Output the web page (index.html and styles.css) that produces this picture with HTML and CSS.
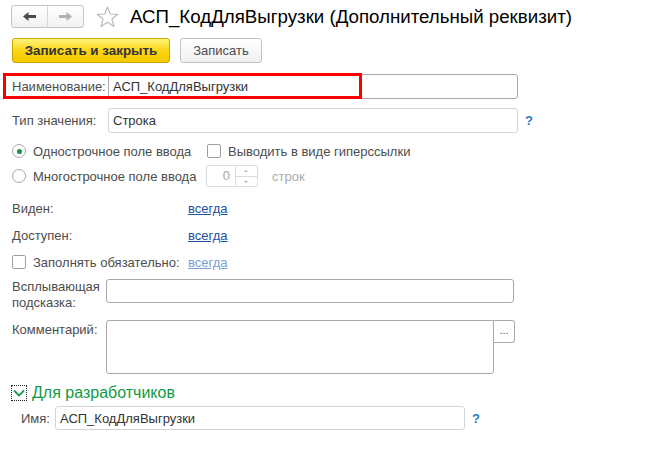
FILE: index.html
```html
<!DOCTYPE html>
<html lang="ru">
<head>
<meta charset="utf-8">
<title>АСП_КодДляВыгрузки</title>
<link rel="stylesheet" href="styles.css">
</head>
<body>
<div class="page">
  <header class="head">
    <div class="nav">
      <span class="nav-btn">
        <svg width="13" height="9" viewBox="0 0 13 9"><polygon points="0,4.5 5.5,0 5.5,9" fill="#4a4a4a"/><rect x="5" y="3" width="8" height="3" fill="#4a4a4a"/></svg>
      </span>
      <span class="nav-btn">
        <svg width="13" height="9" viewBox="0 0 13 9"><polygon points="13,4.5 7.5,0 7.5,9" fill="#b0b0b0"/><rect x="0" y="3" width="8" height="3" fill="#b0b0b0"/></svg>
      </span>
    </div>
    <svg class="star" width="23" height="22" viewBox="0 0 23 22"><polygon points="11.5,1 14.3,8 21.8,8.3 15.9,13 18,20.5 11.5,16.2 5,20.5 7.1,13 1.2,8.3 8.7,8" fill="none" stroke="#b8b8b8" stroke-width="1.1" stroke-linejoin="round"/></svg>
    <h1 class="title">АСП_КодДляВыгрузки (Дополнительный реквизит)</h1>
  </header>

  <div class="toolbar">
    <button class="btn btn-primary">Записать и закрыть</button>
    <button class="btn">Записать</button>
  </div>

  <div class="row row-name">
    <span class="label">Наименование:</span>
    <div class="field field-dark w410">АСП_КодДляВыгрузки</div>
    <div class="highlight"></div>
  </div>

  <div class="row row-type">
    <span class="label">Тип значения:</span>
    <div class="field field-light w410">Строка</div>
    <span class="help">?</span>
  </div>

  <div class="row row-radio1">
    <span class="radio checked"><span class="dot"></span></span>
    <span class="opt-text opt-w">Однострочное поле ввода</span>
    <span class="check check-gap"></span>
    <span class="opt-text">Выводить в виде гиперссылки</span>
  </div>

  <div class="row row-radio2">
    <span class="radio"></span>
    <span class="opt-text opt-w">Многострочное поле ввода</span>
    <div class="spin">
      <span class="spin-val">0</span>
      <span class="spin-btns"><span class="up"></span><span class="down"></span></span>
    </div>
    <span class="muted">строк</span>
  </div>

  <div class="row row-seen">
    <span class="label wide">Виден:</span>
    <a class="link" href="#">всегда</a>
  </div>

  <div class="row row-avail">
    <span class="label wide">Доступен:</span>
    <a class="link" href="#">всегда</a>
  </div>

  <div class="row row-req">
    <span class="check"></span>
    <span class="opt-text req-w">Заполнять обязательно:</span>
    <a class="link link-light" href="#">всегда</a>
  </div>

  <div class="row row-tip">
    <span class="label label-2l">Всплывающая<br>подсказка:</span>
    <div class="field field-dark w408 h24"></div>
  </div>

  <div class="row row-comment">
    <span class="label label-top">Комментарий:</span>
    <div class="field field-dark area"></div>
    <span class="dots">...</span>
  </div>

  <div class="row row-group">
    <span class="toggle">
      <svg width="12" height="8" viewBox="0 0 12 8"><polyline points="1,1.5 6,6.5 11,1.5" fill="none" stroke="#1a9c4c" stroke-width="1.8"/></svg>
    </span>
    <span class="group-title">Для разработчиков</span>
  </div>

  <div class="row row-id">
    <span class="label label-id">Имя:</span>
    <div class="field field-light w410">АСП_КодДляВыгрузки</div>
    <span class="help">?</span>
  </div>
</div>
</body>
</html>
```

FILE: styles.css
```css
html, body {
  margin: 0;
  padding: 0;
  background: #ffffff;
}

body {
  font-family: "Liberation Sans", Arial, sans-serif;
  font-size: 13px;
  color: #4d4d4d;
  width: 665px;
  height: 454px;
  overflow: hidden;
}

.page {
  display: flex;
  flex-direction: column;
}

.head {
  display: flex;
  align-items: center;
  height: 23px;
  margin-top: 5px;
  padding-left: 11px;
}

.nav {
  display: flex;
  width: 73px;
  height: 23px;
  box-sizing: border-box;
  border: 1px solid #c4c4c4;
  border-radius: 3px;
  background: linear-gradient(#ffffff, #f1f1f1);
}

.nav-btn {
  flex: 1;
  display: flex;
  align-items: center;
  justify-content: center;
}

.nav-btn + .nav-btn {
  border-left: 1px solid #d6d6d6;
}

.star {
  margin-left: 12px;
  margin-top: 1px;
}

.title {
  margin: 0 0 0 11px;
  font-size: 18.7px;
  font-weight: normal;
  color: #000;
  white-space: nowrap;
  line-height: 23px;
}

.toolbar {
  display: flex;
  margin-top: 10px;
  padding-left: 12px;
  gap: 10px;
  height: 25px;
}

.btn {
  font-family: "Liberation Sans", Arial, sans-serif;
  font-size: 13px;
  height: 25px;
  padding: 0 10px;
  border: 1px solid #c2c2c2;
  border-radius: 3px;
  background: linear-gradient(#ffffff, #f0f0f0);
  color: #4d4d4d;
  box-sizing: border-box;
}

.btn-primary {
  width: 158px;
  font-weight: bold;
  font-size: 13.4px;
  color: #333;
  border-color: #c9a800;
  background: linear-gradient(#fff27a, #fad40f 55%, #f3c900);
}

.btn:not(.btn-primary) {
  width: 82px;
}

.row {
  display: flex;
  align-items: center;
  padding-left: 12px;
  position: relative;
}

.label {
  width: 96px;
  flex: none;
  white-space: nowrap;
}

.label.wide {
  width: 176px;
}

.field {
  box-sizing: border-box;
  height: 25px;
  border-radius: 3px;
  padding: 0 4px;
  display: flex;
  align-items: center;
  color: #333;
  background: #fff;
}

.field-dark {
  border: 1px solid #a9a9a9;
}

.field-light {
  border: 1px solid #d4d4d4;
}

.w410 { width: 410px; }
.w408 { width: 408px; }
.h24 { height: 24px; }

.help {
  margin-left: 7px;
  color: #1f7cc4;
  font-weight: bold;
  font-size: 13px;
}

.row-name {
  margin-top: 11px;
  height: 25px;
}

.highlight {
  position: absolute;
  left: 3px;
  top: -1px;
  width: 359px;
  height: 26px;
  box-sizing: border-box;
  border: 3px solid #ff0000;
}

.row-type {
  margin-top: 9px;
  height: 25px;
}

.row-radio1 {
  margin-top: 8px;
  height: 20px;
}

.row-radio2 {
  margin-top: 3px;
  height: 24px;
}

.radio {
  width: 14px;
  height: 14px;
  box-sizing: border-box;
  border: 1px solid #a8a8a8;
  border-radius: 50%;
  flex: none;
  display: flex;
  align-items: center;
  justify-content: center;
  background: #fff;
}

.dot {
  width: 5px;
  height: 5px;
  border-radius: 50%;
  background: #179447;
}

.opt-text {
  margin-left: 7px;
  white-space: nowrap;
}

.opt-w {
  width: 173px;
}

.check-gap {
  margin-left: 1px;
}

.req-w {
  width: 155px;
}

.check {
  width: 14px;
  height: 14px;
  box-sizing: border-box;
  border: 1px solid #a0a0a0;
  border-radius: 2px;
  flex: none;
  background: #fff;
}

.spin {
  display: flex;
  box-sizing: border-box;
  width: 52px;
  height: 22px;
  border: 1px solid #dcdcdc;
  border-radius: 2px;
}

.spin-val {
  flex: 1;
  text-align: right;
  padding-right: 5px;
  line-height: 20px;
  color: #a8a8a8;
}

.spin-btns {
  width: 21px;
  border-left: 1px solid #dcdcdc;
  display: flex;
  flex-direction: column;
}

.spin-btns .up,
.spin-btns .down {
  flex: 1;
  position: relative;
}

.spin-btns .up {
  border-bottom: 1px solid #dcdcdc;
}

.spin-btns .up::after,
.spin-btns .down::after {
  content: "";
  position: absolute;
  left: 8px;
  width: 0;
  height: 0;
  border-left: 2px solid transparent;
  border-right: 2px solid transparent;
}

.spin-btns .up::after {
  top: 4px;
  border-bottom: 2px solid #b0b0b0;
}

.spin-btns .down::after {
  top: 4px;
  border-top: 2px solid #b0b0b0;
}

.muted {
  margin-left: 14px;
  color: #acacac;
}

.row-seen {
  margin-top: 10px;
  height: 20px;
}

.row-avail,
.row-req {
  margin-top: 7px;
  height: 20px;
}

.link {
  color: #1e4fa0;
  text-decoration: underline;
}

.link-light {
  color: #78a0d6;
}

.row-tip {
  margin-top: 7px;
  align-items: flex-start;
  height: 32px;
}

.label-2l {
  width: 94px;
  line-height: 16px;
}

.row-comment {
  margin-top: 9px;
  align-items: flex-start;
  height: 54px;
}

.label-top {
  width: 94px;
  margin-top: 2px;
}

.area {
  width: 388px;
  height: 54px;
  border-radius: 3px 0 3px 3px;
}

.dots {
  box-sizing: border-box;
  width: 21px;
  height: 23px;
  border: 1px solid #a9a9a9;
  border-left: none;
  border-radius: 0 3px 3px 0;
  text-align: center;
  line-height: 19px;
  font-size: 11px;
  color: #555;
}

.row-group {
  margin-top: 10px;
  height: 18px;
  padding-left: 11px;
}

.toggle {
  box-sizing: border-box;
  width: 16px;
  height: 16px;
  border: 1px dotted #222;
  display: flex;
  align-items: center;
  justify-content: center;
}

.group-title {
  margin-left: 5px;
  font-size: 16px;
  color: #119a46;
  white-space: nowrap;
}

.row-id {
  margin-top: 4px;
  height: 24px;
  padding-left: 21px;
}

.label-id {
  width: 34px;
}

.row-id .field {
  height: 24px;
}
```
